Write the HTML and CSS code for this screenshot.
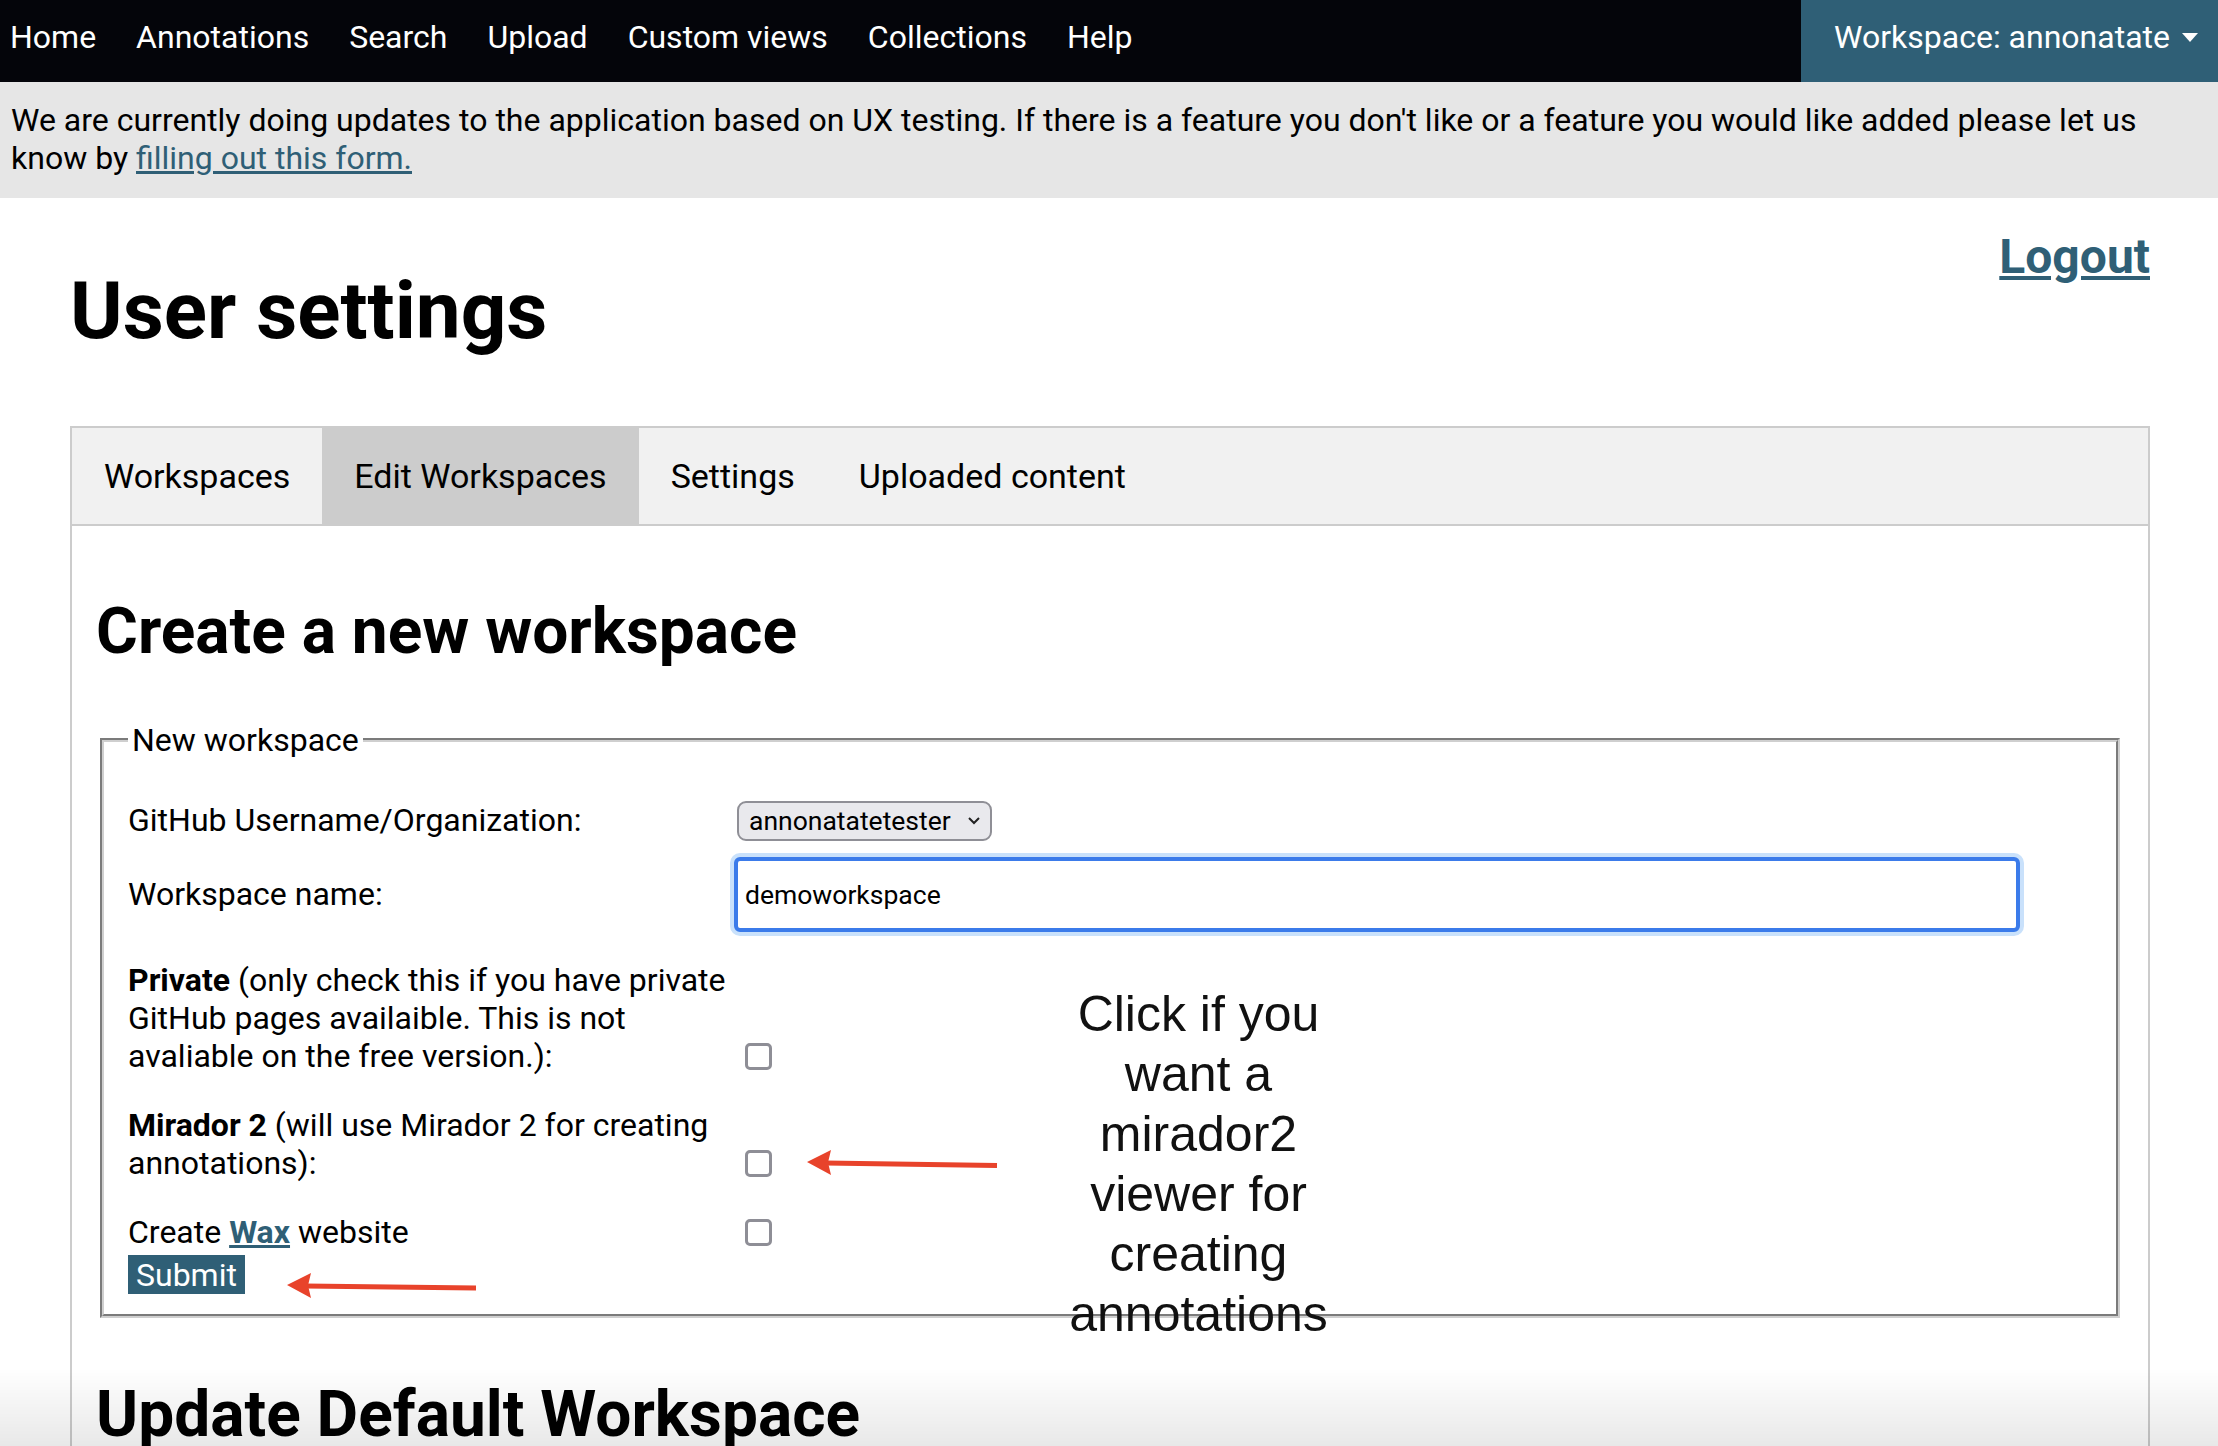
FILE: index.html
```html
<!DOCTYPE html>
<html lang="en">
<head>
<meta charset="utf-8">
<title>User settings</title>
<link rel="stylesheet" href="styles.css">
</head>
<body>
<nav class="topnav">
  <ul class="nav-links">
    <li><a href="#">Home</a></li>
    <li><a href="#">Annotations</a></li>
    <li><a href="#">Search</a></li>
    <li><a href="#">Upload</a></li>
    <li><a href="#">Custom views</a></li>
    <li><a href="#">Collections</a></li>
    <li><a href="#">Help</a></li>
  </ul>
  <div class="workspace-menu">Workspace: annonatate<span class="caret"></span></div>
</nav>
<div class="notice">We are currently doing updates to the application based on UX testing. If there is a feature you don't like or a feature you would like added please let us know by <a href="#">filling out this form.</a></div>
<main class="page">
  <div class="page-head">
    <h1>User settings</h1>
    <a class="logout" href="#">Logout</a>
  </div>
  <div class="tabs">
    <button class="tab">Workspaces</button>
    <button class="tab active">Edit Workspaces</button>
    <button class="tab">Settings</button>
    <button class="tab">Uploaded content</button>
  </div>
  <section class="tabcontent">
    <h2>Create a new workspace</h2>
    <fieldset class="new-ws">
      <legend>New workspace</legend>
      <div class="row row-first">
        <label class="lbl">GitHub Username/Organization:</label>
        <div class="ctrl">
          <span class="select-wrap">
            <select class="select"><option>annonatatetester</option></select>
            <svg class="chev" width="14" height="9" viewBox="0 0 14 9"><path d="M2 2 L7 7 L12 2" fill="none" stroke="#222" stroke-width="2"/></svg>
          </span>
        </div>
      </div>
      <div class="row row-second">
        <label class="lbl">Workspace name:</label>
        <div class="ctrl"><input class="text-input" type="text" value="demoworkspace"></div>
      </div>
      <div class="row row-check row-private">
        <label class="lbl"><b>Private</b> (only check this if you have private GitHub pages availaible. This is not avaliable on the free version.):</label>
        <div class="ctrl"><input class="check" type="checkbox"></div>
      </div>
      <div class="row row-check">
        <label class="lbl"><b>Mirador 2</b> (will use Mirador 2 for creating annotations):</label>
        <div class="ctrl"><input class="check" type="checkbox"></div>
      </div>
      <div class="row row-check">
        <label class="lbl">Create <a href="#" class="wax">Wax</a> website</label>
        <div class="ctrl"><input class="check" type="checkbox"></div>
      </div>
      <button class="submit" type="button">Submit</button>
    </fieldset>
    <h2>Update Default Workspace</h2>

    <div class="note">Click if you want a mirador2 viewer for creating annotations</div>
    <svg class="arrow arrow-one" width="196" height="30" viewBox="0 0 196 30"><line x1="20" y1="15" x2="192" y2="17.5" stroke="#e8432b" stroke-width="5"/><polygon points="2,14 26,2 23,14.5 26,27" fill="#e8432b"/></svg>
    <svg class="arrow arrow-two" width="196" height="30" viewBox="0 0 196 30"><line x1="20" y1="15" x2="191" y2="17" stroke="#e8432b" stroke-width="5"/><polygon points="2,14 26,2 23,14.5 26,27" fill="#e8432b"/></svg>
  </section>
</main>
<div class="screen-fade"></div>
</body>
</html>
```
FILE: styles.css
```css
* { box-sizing: border-box; }

body {
  margin: 0;
  font-family: Roboto, "Noto Sans", Arial, sans-serif;
  font-size: 32px;
  color: #000;
  background: #fff;
}

/* top navigation */
.topnav {
  display: flex;
  justify-content: space-between;
  height: 82px;
  background: #04050a;
}
.nav-links {
  display: flex;
  gap: 40px;
  list-style: none;
  margin: 0;
  padding: 18px 0 0 10px;
}
.nav-links a {
  color: #fff;
  text-decoration: none;
  font-size: 32px;
}
.workspace-menu {
  display: flex;
  align-items: flex-start;
  background: #2f5f76;
  color: #fff;
  font-size: 32px;
  padding: 18px 20px 0 33px;
}
.caret {
  width: 0;
  height: 0;
  margin: 15px 0 0 12px;
  border-left: 8px solid transparent;
  border-right: 8px solid transparent;
  border-top: 9px solid #fff;
}

/* notice banner */
.notice {
  background: #e6e6e6;
  padding: 19px 11px 21px;
  font-size: 32px;
}
.notice a { color: #2f5f76; }

/* page */
.page {
  padding: 0 68px 0 70px;
}
.page-head {
  display: flex;
  justify-content: space-between;
  align-items: flex-start;
  padding-top: 30px;
}
.page-head h1 {
  margin: 36px 0 68px;
  font-size: 80px;
  font-weight: 700;
}
.logout {
  font-size: 48px;
  font-weight: 700;
  color: #2f5f76;
}

/* tabs */
.tabs {
  display: flex;
  border: 2px solid #ccc;
  background: #f1f1f1;
}
.tab {
  background: inherit;
  border: none;
  padding: 28px 32px;
  font-family: inherit;
  font-size: 34px;
  color: #000;
}
.tab.active { background: #ccc; }

.tabcontent {
  position: relative;
  border: 2px solid #ccc;
  border-top: none;
  padding: 12px 24px 60px;
}
.tabcontent h2 {
  font-size: 64px;
  font-weight: 700;
  margin: 56px 0 52px;
}
.new-ws + h2 { margin-top: 59px; }

/* fieldset form */
.new-ws {
  margin: 0 4px;
  border: 4px groove #cfcfcf;
  padding: 11px 24px 20px;
}
.new-ws legend {
  padding: 0 4px;
  font-size: 32px;
}
.row {
  display: grid;
  grid-template-columns: 609px 1fr;
  align-items: center;
}
.row-first { margin-top: 29px; }
.row-second { margin-top: 16px; }
.row-check { align-items: end; margin-top: 31px; }
.row-private { margin-top: 29px; }
.lbl { padding-right: 4px; }
.wax { color: #2f5f76; font-weight: 700; }

.select-wrap {
  position: relative;
  display: inline-block;
  vertical-align: middle;
}
.select {
  appearance: none;
  -webkit-appearance: none;
  width: 255px;
  height: 40px;
  border: 2px solid #8f8f96;
  border-radius: 9px;
  background: #e9e9ed;
  font-family: inherit;
  font-size: 26.5px;
  color: #000;
  padding: 0 30px 0 10px;
}
.chev {
  position: absolute;
  right: 11px;
  top: 16px;
}
.text-input {
  display: block;
  width: 1286px;
  height: 75px;
  margin-left: -3px;
  border: 4px solid #3b7bea;
  border-radius: 6px;
  box-shadow: 0 0 0 4px #c9e1fb;
  outline: none;
  padding: 0 7px;
  font-family: inherit;
  font-size: 26.5px;
  color: #000;
}
.check {
  appearance: none;
  -webkit-appearance: none;
  display: block;
  width: 27px;
  height: 27px;
  margin: 0 0 5px 8px;
  border: 3px solid #8e8e96;
  border-radius: 5px;
  background: #fff;
}
.submit {
  display: block;
  margin-top: 4px;
  border: none;
  background: #2f5f76;
  color: #fff;
  font-family: inherit;
  font-size: 32px;
  padding: 1px 8px 0;
}

/* overlaid annotations */
.note {
  position: absolute;
  left: 989px;
  top: 458px;
  width: 275px;
  text-align: center;
  font-family: "Liberation Sans", Arial, sans-serif;
  font-size: 50px;
  line-height: 60px;
  color: #111;
}
.arrow { position: absolute; }
.arrow-one { left: 733px; top: 622px; }
.arrow-two { left: 213px; top: 745px; }

.screen-fade {
  position: fixed;
  left: 0;
  right: 0;
  bottom: 0;
  height: 78px;
  background: linear-gradient(to bottom, rgba(0,0,0,0), rgba(0,0,0,0.09));
  pointer-events: none;
}
```
